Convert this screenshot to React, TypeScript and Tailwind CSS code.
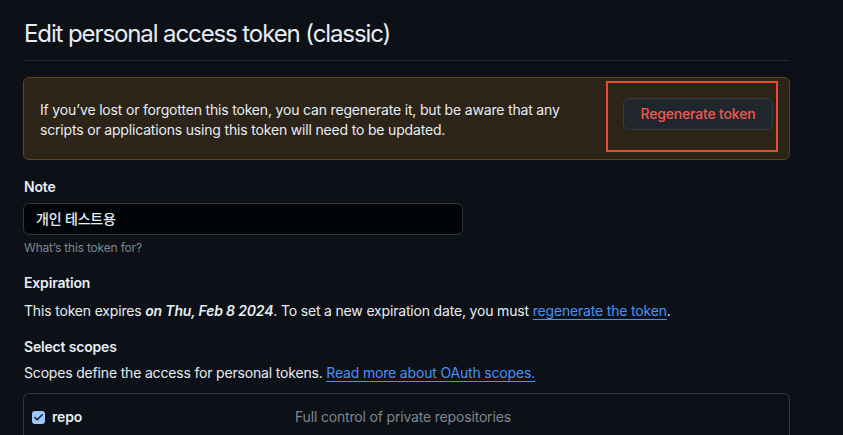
import { Check } from "lucide-react";

const App = () => {
  return (
    <div
      className="h-[435px] w-full bg-[#0d1117] text-[#e6edf3] overflow-hidden tracking-[-0.011em]"
      style={{ fontFamily: "Inter, 'Noto Sans CJK KR', sans-serif" }}
    >
      <div className="w-[767px] ml-[23px] pt-4">
        {/* Header */}
        <div className="ml-[1px] pb-2 border-b border-[#21262d]">
          <h1 className="text-2xl leading-9 font-normal tracking-[-0.046em]">
            Edit personal access token (classic)
          </h1>
        </div>

        {/* Flash warning */}
        <div className="relative mt-4 flex items-start justify-between rounded-md border border-[#5b4718] bg-[#2c2418] px-4 pt-5 pb-[19px]">
          <p className="mt-[2px] text-sm leading-5">
            If you’ve lost or forgotten this token, you can regenerate it, but be aware that any
            <br />
            scripts or applications using this token will need to be updated.
          </p>
          <button className="h-8 w-[150px] rounded-md border border-[#363b42] bg-[#21262d] text-sm font-medium text-[#f0584c]">
            Regenerate token
          </button>
          <div className="absolute left-[582px] top-[3px] h-[71px] w-[172px] border-2 border-[#ea4a2f]" />
        </div>

        {/* Note */}
        <div className="mt-[17px] ml-[1px]">
          <label className="block text-sm leading-5 font-semibold">Note</label>
          <div className="mt-1.5 -ml-[1px] flex h-8 w-[440px] items-center rounded-md border border-[#30363d] bg-[#010409] px-3 text-sm font-medium">
            개인 테스트용
          </div>
          <p className="mt-1 text-xs leading-[18px] text-[#7d8590] tracking-[-0.015em]">
            What’s this token for?
          </p>
        </div>

        {/* Expiration */}
        <div className="mt-4 ml-[1px]">
          <h3 className="text-sm leading-5 font-semibold">Expiration</h3>
          <p className="mt-2 text-sm leading-5">
            This token expires <em className="font-semibold">on Thu, Feb 8 2024</em>. To set a new
            expiration date, you must{" "}
            <a className="text-[#4493f8] underline underline-offset-[3px]">regenerate the token</a>.
          </p>
        </div>

        {/* Scopes */}
        <div className="mt-4 ml-[1px]">
          <h3 className="text-sm leading-5 font-semibold">Select scopes</h3>
          <p className="mt-1.5 text-sm leading-5">
            Scopes define the access for personal tokens.{" "}
            <a className="text-[#4493f8] underline underline-offset-[3px]">
              Read more about OAuth scopes.
            </a>
          </p>
        </div>

        <div className="mt-[10px] h-20 rounded-t-md border border-[#30363d] border-b-0">
          <div className="flex items-center pt-[13px] pl-2 text-sm leading-5">
            <span className="flex h-[13px] w-[13px] items-center justify-center rounded-[3px] bg-[#9ec5fe]">
              <Check className="h-[11px] w-[11px] text-[#1f2328]" strokeWidth={3.5} />
            </span>
            <span className="ml-[7px] w-[243px] font-semibold">repo</span>
            <span className="text-[#7d8590]">Full control of private repositories</span>
          </div>
        </div>
      </div>
    </div>
  );
};

export default App;
